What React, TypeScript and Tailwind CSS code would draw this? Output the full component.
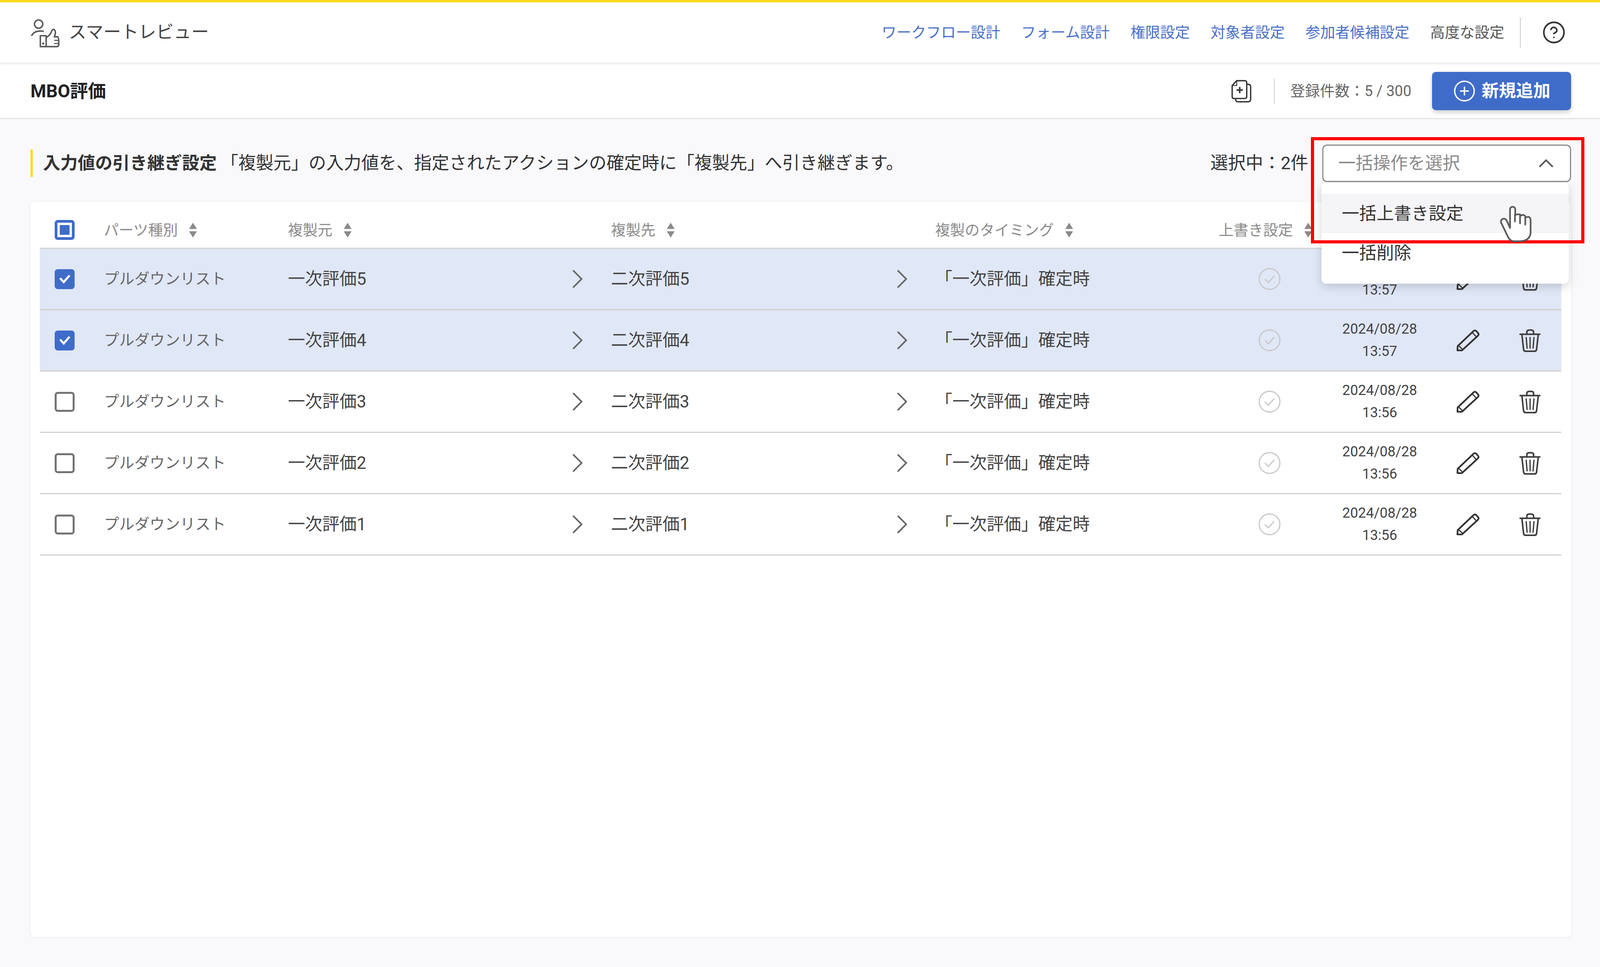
import { CircleHelp, CirclePlus } from 'lucide-react'

const COLS =
  'grid grid-cols-[164px_471px_827px_830px_726px_260px_304px_146px_167px] items-center'

const rows = [
  { n: 5, time: '13:57', selected: true },
  { n: 4, time: '13:57', selected: true },
  { n: 3, time: '13:56', selected: false },
  { n: 2, time: '13:56', selected: false },
  { n: 1, time: '13:56', selected: false },
]

function Logo() {
  return (
    <svg viewBox="50 35 230 235" className="w-[77px] h-[78px]" fill="none" stroke="#555" strokeWidth="11" strokeLinecap="round" strokeLinejoin="round">
      <circle cx="115" cy="88" r="32" />
      <path d="M62 175 Q85 135 150 143" />
      <rect x="128" y="178" width="45" height="84" />
      <circle cx="150" cy="238" r="3" fill="#555" />
      <path d="M173 192 Q208 172 216 140 Q226 120 240 136 Q250 152 236 186 L262 186 Q272 190 270 250 Q266 262 255 262 L173 262" />
      <path d="M238 214 H268 M238 238 H266" strokeWidth="8" />
    </svg>
  )
}

function CopyPlusIcon() {
  return (
    <svg viewBox="70 35 165 185" className="w-[55px] h-[62px]" fill="none" stroke="#333" strokeWidth="10" strokeLinejoin="round">
      <path d="M115 48 H175 Q192 48 192 65 V170 Q192 185 175 185 H95 Q80 185 80 170 V85 Z" />
      <path d="M115 48 V85 H80" strokeWidth="7" />
      <path d="M196 75 Q222 75 222 95 V190 Q222 210 200 210 H125 Q108 210 105 188" />
      <path d="M138 96 V144 M114 120 H162" strokeWidth="12" />
    </svg>
  )
}

function SortIcon() {
  return (
    <svg viewBox="0 0 22 38" className="w-[22px] h-[38px] shrink-0" fill="#8a8a8a">
      <path d="M11 0 L21 16 H1 Z M11 38 L21 22 H1 Z" />
    </svg>
  )
}

function ChevronRight() {
  return (
    <svg viewBox="0 0 26 46" className="w-[26px] h-[46px]" fill="none" stroke="#666" strokeWidth="4">
      <path d="M2 1 L24 23 L2 45" />
    </svg>
  )
}

function CheckCircle() {
  return (
    <svg viewBox="0 0 58 58" className="w-[58px] h-[58px]" fill="none" stroke="#c8c8cc" strokeWidth="3">
      <circle cx="29" cy="29" r="26.5" />
      <path d="M17 29 L26 38 L41 21" />
    </svg>
  )
}

function PencilIcon() {
  return (
    <svg viewBox="45 30 190 180" className="w-[63px] h-[60px]" fill="none" stroke="#333" strokeWidth="13" strokeLinejoin="round">
      <path d="M62 165 L185 48 Q195 40 205 48 L220 65 Q228 75 218 85 L95 198 L60 198 Z" />
      <path d="M177 62 L205 92 M68 160 L102 192" strokeWidth="9" />
    </svg>
  )
}

function TrashIcon() {
  return (
    <svg viewBox="535 30 180 190" className="w-[60px] h-[63px]" fill="none" stroke="#3d3d3d" strokeWidth="12" strokeLinecap="round" strokeLinejoin="round">
      <path d="M548 77 H700" />
      <path d="M600 77 V60 Q600 44 620 44 H632 Q652 44 652 60 V77" />
      <path d="M562 80 L575 195 Q578 208 590 208 H660 Q672 208 675 195 L688 80" />
      <path d="M595 102 L602 184 M625 102 V184 M655 102 L648 184" strokeWidth="10" />
    </svg>
  )
}

function HandCursor() {
  return (
    <svg viewBox="0 0 360 360" className="w-[120px] h-[120px]" fill="#fff" stroke="#5c5c5c" strokeWidth="13" strokeLinejoin="round" strokeLinecap="round">
      <path d="M140 220 L140 80 Q140 58 160 58 Q180 58 180 80 L180 120 Q215 108 225 125 Q250 112 262 140 Q295 125 298 160 L298 260 Q290 320 215 322 L170 322 Q140 320 125 290 L72 180 Q65 160 85 150 Q105 145 115 165 Z" />
      <path d="M178 170 V120 M217 185 V125 M257 195 V140" fill="none" />
    </svg>
  )
}

function Checkbox({ checked }: { checked: boolean }) {
  if (checked) {
    return (
      <div className="w-[51px] h-[51px] rounded-lg bg-[#3f6cc9] flex items-center justify-center">
        <svg viewBox="0 0 30 24" className="w-[30px] h-[24px]" fill="none" stroke="#fff" strokeWidth="5.5">
          <path d="M3 10 L12 20 L27 3" />
        </svg>
      </div>
    )
  }
  return <div className="w-[51px] h-[51px] rounded-lg border-[5px] border-[#737373] bg-white" />
}

function HeaderCell({ label }: { label: string }) {
  return (
    <div className="flex items-center gap-[28px]">
      <span className="text-[38px] leading-[50px] text-[#8a8a8a]">{label}</span>
      <SortIcon />
    </div>
  )
}

export default function App() {
  return (
    <div className="w-[4100px] h-[2475px] bg-[#f9f9fc] flex flex-col overflow-hidden [font-family:Roboto,'Noto_Sans_CJK_JP',sans-serif]">
      <header className="h-[160px] shrink-0 bg-white border-t-[6px] border-[#ffd91a] shadow-[0_3px_6px_rgba(0,0,0,0.10)] flex items-center pl-[77px] pr-[91px] relative z-10">
        <div className="flex items-center gap-[22px]">
          <Logo />
          <span className="text-[45px] leading-[60px] text-[#444]">スマートレビュー</span>
        </div>
        <nav className="ml-auto flex items-center gap-[53px] text-[38px] leading-[50px] text-[#4a70c8]">
          <span>ワークフロー設計</span>
          <span>フォーム設計</span>
          <span>権限設定</span>
          <span>対象者設定</span>
          <span>参加者候補設定</span>
          <span className="text-[#555]">高度な設定</span>
        </nav>
        <div className="w-[2px] h-[77px] bg-[#c9c9c9] ml-[40px] mr-[54px]" />
        <CircleHelp size={62} strokeWidth={1.6} color="#333" />
      </header>

      <div className="h-[145px] shrink-0 bg-white border-b-[3px] border-[#e3e3e8] flex items-center px-[78px] pt-[4px]">
        <span className="text-[46px] leading-[60px] font-bold text-[#222]">MBO評価</span>
        <div className="ml-auto flex items-center">
          <CopyPlusIcon />
          <div className="w-[2px] h-[65px] bg-[#cfcfcf] ml-[55px] mr-[40px]" />
          <span className="text-[38px] leading-[50px] text-[#666]">登録件数：5 / 300</span>
          <button className="ml-[53px] w-[356px] h-[98px] rounded-[10px] bg-[#3f6cc9] shadow-[0_6px_12px_rgba(0,0,0,0.18)] flex items-center justify-center gap-[14px] text-white">
            <CirclePlus size={60} strokeWidth={1.4} />
            <span className="text-[44px] leading-[60px] font-bold">新規追加</span>
          </button>
        </div>
      </div>

      <div className="h-[212px] shrink-0 flex items-center px-[78px] pt-[14px]">
        <div className="w-[6px] h-[70px] bg-[#ffd91a]" />
        <span className="ml-[26px] text-[44.5px] leading-[60px] font-bold text-[#333]">入力値の引き継ぎ設定</span>
        <span className="ml-[10px] text-[45px] leading-[60px] text-[#333]">
          「複製元」の入力値を、指定されたアクションの確定時に「複製先」へ引き継ぎます。
        </span>
        <span className="ml-auto text-[45px] leading-[60px] text-[#333]">選択中：2件</span>
        <div className="relative ml-[36px] w-[637px] h-[96px]">
          <div className="h-full rounded-xl border-[3px] border-[#8c8c8c] bg-white flex items-center justify-between pl-[38px] pr-[42px]">
            <span className="text-[44.5px] leading-[60px] text-[#8a8a8a]">一括操作を選択</span>
            <svg viewBox="0 0 38 22" className="w-[38px] h-[22px]" fill="none" stroke="#555" strokeWidth="4">
              <path d="M2 20 L19 3 L36 20" />
            </svg>
          </div>
          <div className="absolute left-[-2px] top-[98px] w-[633px] rounded-xl bg-white py-[28px] shadow-[0_8px_24px_rgba(0,0,0,0.16)] z-20">
            <div className="h-[101px] bg-[#f5f5f8] flex items-center pl-[52px] text-[44.5px] leading-[60px] text-[#333]">一括上書き設定</div>
            <div className="h-[101px] flex items-center pl-[52px] text-[44.5px] leading-[60px] text-[#333]">一括削除</div>
          </div>
          <div className="absolute left-[-29px] top-[-19px] w-[700px] h-[272px] border-[8px] border-[#ff0000] z-30" />
          <div className="absolute left-[434px] top-[140px] z-40">
            <HandCursor />
          </div>
        </div>
      </div>

      <main className="mx-[78px] h-[1881px] shrink-0 rounded-xl bg-white shadow-[0_1px_6px_rgba(0,0,0,0.07)] pl-[24px] pr-[25px]">
        <div className={`${COLS} h-[120px] pt-[26px] border-b-[3px] border-[#d4d4d4]`}>
          <div className="pl-[38px]">
            <div className="w-[51px] h-[51px] rounded-lg border-[7px] border-[#3f6cc9] bg-white flex items-center justify-center">
              <div className="w-[25px] h-[25px] bg-[#3f6cc9]" />
            </div>
          </div>
          <HeaderCell label="パーツ種別" />
          <HeaderCell label="複製元" />
          <HeaderCell label="複製先" />
          <HeaderCell label="複製のタイミング" />
          <HeaderCell label="上書き設定" />
          <div />
          <div />
          <div />
        </div>
        {rows.map((row) => (
          <div
            key={row.n}
            className={`${COLS} h-[157px] border-b-[3px] border-[#d0d0d0] ${row.selected ? 'bg-[#e0e7f6]' : 'bg-white'}`}
          >
            <div className="pl-[38px]">
              <Checkbox checked={row.selected} />
            </div>
            <div className="text-[39px] leading-[50px] text-[#666]">プルダウンリスト</div>
            <div className="flex items-center justify-between pr-[73px] text-[44px] leading-[60px] text-[#444]">
              <span>一次評価{row.n}</span>
              <ChevronRight />
            </div>
            <div className="flex items-center justify-between pr-[72px] text-[44px] leading-[60px] text-[#444]">
              <span>二次評価{row.n}</span>
              <ChevronRight />
            </div>
            <div className="text-[44px] leading-[60px] text-[#444]">「一次評価」確定時</div>
            <div className="flex justify-center">
              <CheckCircle />
            </div>
            <div className="text-center text-[36px] leading-[57px] text-[#444]">
              <div>2024/08/28</div>
              <div>{row.time}</div>
            </div>
            <div className="flex justify-center">
              <PencilIcon />
            </div>
            <div className="flex justify-center pl-[7px]">
              <TrashIcon />
            </div>
          </div>
        ))}
      </main>
    </div>
  )
}
